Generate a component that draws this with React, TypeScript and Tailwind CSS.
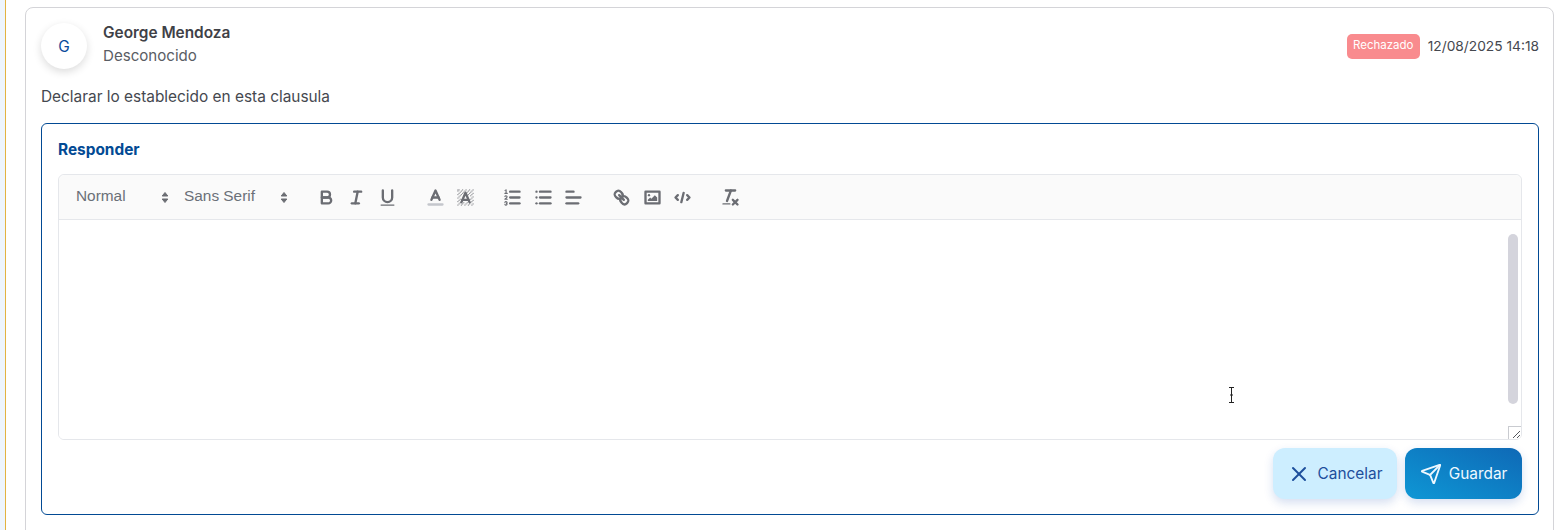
import { Send, X } from 'lucide-react'
import type { ReactNode } from 'react'

const hatch = [
  [2, 2], [3, 2], [6, 2], [9, 2], [12, 2], [15, 2], [2, 3], [5, 3], [8, 3], [11, 3], [14, 3], [4, 4], [7, 4], [10, 4], [13, 4],
  [3, 5], [6, 5], [12, 5], [15, 5], [2, 6], [5, 6], [11, 6], [14, 6], [4, 7], [13, 7], [3, 8], [15, 8], [2, 9], [14, 9], [4, 10], [13, 10],
  [3, 11], [15, 11], [2, 12], [14, 12], [4, 13], [13, 13], [7, 13], [10, 13], [3, 14], [6, 14], [9, 14], [12, 14], [15, 14], [2, 15], [5, 15], [8, 15], [11, 15], [14, 15],
]

function QuillIcon({ children }: { children: ReactNode }) {
  return (
    <button className="w-[30.67px] h-6 flex items-center justify-center shrink-0">
      <svg
        viewBox="0 0 18 18"
        className="w-[21px] h-[21px] shrink-0 text-[#6b6d73]"
        fill="none"
        stroke="currentColor"
        strokeWidth={2}
        strokeLinecap="round"
        strokeLinejoin="round"
      >
        {children}
      </svg>
    </button>
  )
}

function PickerArrows() {
  return (
    <svg viewBox="0 0 8 13" className="w-2 h-[13px] text-[#6b6d73]" fill="currentColor" stroke="currentColor" strokeLinejoin="round">
      <path d="M4 1.5 6.8 5H1.2z" />
      <path d="M4 11.5 1.2 8h5.6z" />
    </svg>
  )
}

function Picker({ label, className }: { label: string; className: string }) {
  return (
    <div className={`flex items-center justify-between h-6 pl-[9px] shrink-0 text-[15.4px] text-[#6b7078] font-['Liberation_Sans',sans-serif] ${className}`}>
      <span className="-mt-0.5">{label}</span>
      <PickerArrows />
    </div>
  )
}

function Toolbar() {
  return (
    <div className="h-[45px] bg-[#fafafa] border-b border-[#e5e7eb] rounded-t-md flex items-center pl-2">
      <Picker label="Normal" className="w-[102px] mr-[6px]" />
      <Picker label="Sans Serif" className="w-[113px] mr-[23px]" />

      <QuillIcon>
        <path d="M5,4H9.5A2.5,2.5,0,0,1,12,6.5v0A2.5,2.5,0,0,1,9.5,9H5A0,0,0,0,1,5,9V4A0,0,0,0,1,5,4Z" />
        <path d="M5,9h5.5A2.5,2.5,0,0,1,13,11.5v0A2.5,2.5,0,0,1,10.5,14H5a0,0,0,0,1,0,0V9A0,0,0,0,1,5,9Z" />
      </QuillIcon>
      <QuillIcon>
        <line x1="7" x2="13" y1="4" y2="4" />
        <line x1="5" x2="11" y1="14" y2="14" />
        <line x1="8" x2="10" y1="14" y2="4" />
      </QuillIcon>
      <QuillIcon>
        <path d="M5,3V9a4.012,4.012,0,0,0,4,4H9a4.012,4.012,0,0,0,4-4V3" />
        <rect height="1" rx=".5" ry=".5" width="12" x="3" y="15" fill="currentColor" stroke="none" />
      </QuillIcon>

      <div className="w-[17px] shrink-0" />
      <QuillIcon>
        <line x1="3" x2="15" y1="15" y2="15" stroke="#c4c6cc" />
        <polyline points="5.5 11 9 3 12.5 11" />
        <line x1="11.63" x2="6.38" y1="9" y2="9" />
      </QuillIcon>
      <QuillIcon>
        <g fill="currentColor" stroke="none" opacity={0.7}>
          {hatch.map(([x, y]) => (
            <rect key={`${x}-${y}`} x={x} y={y} width="1" height="1" />
          ))}
        </g>
        <polyline points="5.5 13 9 5 12.5 13" />
        <line x1="11.63" x2="6.38" y1="11" y2="11" />
      </QuillIcon>

      <div className="w-4 shrink-0" />
      <QuillIcon>
        <line x1="7" x2="15" y1="4" y2="4" />
        <line x1="7" x2="15" y1="9" y2="9" />
        <line x1="7" x2="15" y1="14" y2="14" />
        <line x1="2.5" x2="4.5" y1="5.5" y2="5.5" strokeWidth={1} />
        <path d="M3.5,6A0.5,0.5,0,0,1,3,5.5V3.085l-0.276.138A0.5,0.5,0,0,1,2.053,3c-0.124-.247-0.023-0.324.224-0.447l1-.5A0.5,0.5,0,0,1,4,2.5v3A0.5,0.5,0,0,1,3.5,6Z" fill="currentColor" stroke="none" />
        <path d="M4.5,10.5h-2c0-.234,1.85-1.076,1.85-2.234A0.959,0.959,0,0,0,2.5,8.156" strokeWidth={1} />
        <path d="M2.5,14.846a0.959,0.959,0,0,0,1.85-.109A0.7,0.7,0,0,0,3.75,14a0.688,0.688,0,0,0,.6-0.736,0.959,0.959,0,0,0-1.85-.109" strokeWidth={1} />
      </QuillIcon>
      <QuillIcon>
        <line x1="6" x2="15" y1="4" y2="4" />
        <line x1="6" x2="15" y1="9" y2="9" />
        <line x1="6" x2="15" y1="14" y2="14" />
        <line x1="3" x2="3" y1="4" y2="4" />
        <line x1="3" x2="3" y1="9" y2="9" />
        <line x1="3" x2="3" y1="14" y2="14" />
      </QuillIcon>
      <QuillIcon>
        <line x1="3" x2="15" y1="9" y2="9" />
        <line x1="3" x2="13" y1="14" y2="14" />
        <line x1="3" x2="9" y1="4" y2="4" />
      </QuillIcon>

      <div className="w-[17px] shrink-0" />
      <QuillIcon>
        <line x1="7" x2="11" y1="7" y2="11" />
        <path d="M8.9,4.577a3.476,3.476,0,0,1,.36,4.679A3.476,3.476,0,0,1,4.577,8.9C3.185,7.5,2.035,6.4,4.217,4.217S7.5,3.185,8.9,4.577Z" />
        <path d="M13.423,9.1a3.476,3.476,0,0,0-4.679-.36,3.476,3.476,0,0,0,.36,4.679c1.392,1.392,2.5,2.542,4.679.36S14.815,10.5,13.423,9.1Z" />
      </QuillIcon>
      <QuillIcon>
        <rect height="10" width="12" x="3" y="4" />
        <circle cx="6" cy="7" r="1" fill="currentColor" stroke="none" />
        <polyline points="5 12 5 11 7 9 8 10 11 7 13 9 13 12 5 12" fill="currentColor" stroke="none" />
      </QuillIcon>
      <QuillIcon>
        <polyline points="5 7 3 9 5 11" />
        <polyline points="13 7 15 9 13 11" />
        <line x1="10" x2="8" y1="5" y2="13" />
      </QuillIcon>

      <div className="w-[17px] shrink-0" />
      <QuillIcon>
        <line x1="5" x2="13" y1="3" y2="3" />
        <line x1="6" x2="9.35" y1="12" y2="3" />
        <line x1="11" x2="15" y1="11" y2="15" />
        <line x1="15" x2="11" y1="11" y2="15" />
        <rect height="1" rx=".5" ry=".5" width="7" x="2" y="14" fill="currentColor" stroke="none" />
      </QuillIcon>
    </div>
  )
}

export default function App() {
  return (
    <div className="h-[530px] w-[1559px] overflow-hidden bg-white flex font-['Inter',sans-serif] text-[#45484f]">
      <div className="w-[6px] h-full bg-[#eef5fd] border-r border-[#e3b341] shrink-0" />

      <div className="flex-1 pl-[19px] pr-[5px] pt-[7px]">
        <div className="h-[540px] border border-[#d4d4d8] rounded-lg pl-[15px] pr-[14px] pt-[15px]">
          <div className="flex items-center justify-between">
            <div className="flex items-start gap-4">
              <div className="w-[46px] h-[46px] pt-px rounded-full bg-white shadow-[0_3px_8px_rgba(0,0,0,0.14)] flex items-center justify-center text-[15.4px] text-[#0b4a9a]">
                G
              </div>
              <div className="-mt-[2px]">
                <div className="text-[15.4px] leading-[23px] font-semibold text-[#3f4147]">George Mendoza</div>
                <div className="text-[15.1px] leading-[23px] text-[#5a5d64]">Desconocido</div>
              </div>
            </div>
            <div className="flex items-center gap-2">
              <span className="h-[25px] w-[73px] justify-center rounded-[5px] bg-[#f98b8e] text-white text-[11.5px] flex items-center">Rechazado</span>
              <span className="text-[13.75px] text-[#45484f]">12/08/2025 14:18</span>
            </div>
          </div>

          <p className="mt-[16px] text-[15.4px] leading-6">Declarar lo establecido en esta clausula</p>

          <div className="mt-[14px] h-[392px] border border-[#024a94] rounded-md px-4 pt-[14px]">
            <h3 className="text-[15.4px] leading-6 font-bold text-[#024a94]">Responder</h3>

            <div className="mt-[12px] h-[266px] border border-[#e5e7eb] rounded-md flex flex-col relative overflow-hidden">
              <Toolbar />
              <div className="flex-1 bg-white" />

              <div className="absolute right-[3px] top-[59px] w-[10px] h-[170px] rounded-full bg-[#d4d4dc]" />
              <div className="absolute right-0 bottom-0 w-[13px] h-[13px] bg-white border-l border-t border-[#c9cbd0]">
                <svg viewBox="0 0 12 12" className="w-3 h-3 text-[#55585e]" stroke="currentColor" strokeWidth={1}>
                  <line x1="4" y1="11" x2="11" y2="4" />
                  <line x1="8" y1="11" x2="11" y2="8" />
                </svg>
              </div>
              <svg viewBox="0 0 9 16" className="absolute left-[1168px] top-[212px] w-[9px] h-4 text-[#222]" fill="none" stroke="currentColor" strokeWidth={1}>
                <path d="M2 .5h5M4.5.5v15M2 15.5h5" />
                <path d="M3 8h3" />
              </svg>
            </div>

            <div className="mt-2 flex justify-end gap-2">
              <button className="h-[51px] w-[124px] rounded-xl bg-[#cdeeff] text-[#1d4f9c] text-[15.4px] flex items-center justify-center gap-[9px] shadow-[0_4px_10px_rgba(30,80,180,0.18)]">
                <X className="w-6 h-6 -ml-px -mr-[2px]" strokeWidth={2} />
                Cancelar
              </button>
              <button className="h-[51px] w-[117px] rounded-xl bg-gradient-to-tr from-[#0f97d5] to-[#0f69b6] text-[#eef8ff] text-[15.4px] flex items-center justify-center gap-[7px] shadow-[0_4px_10px_rgba(30,80,180,0.18)]">
                <Send className="w-[22px] h-[22px]" strokeWidth={2} />
                Guardar
              </button>
            </div>
          </div>
        </div>
      </div>
    </div>
  )
}
